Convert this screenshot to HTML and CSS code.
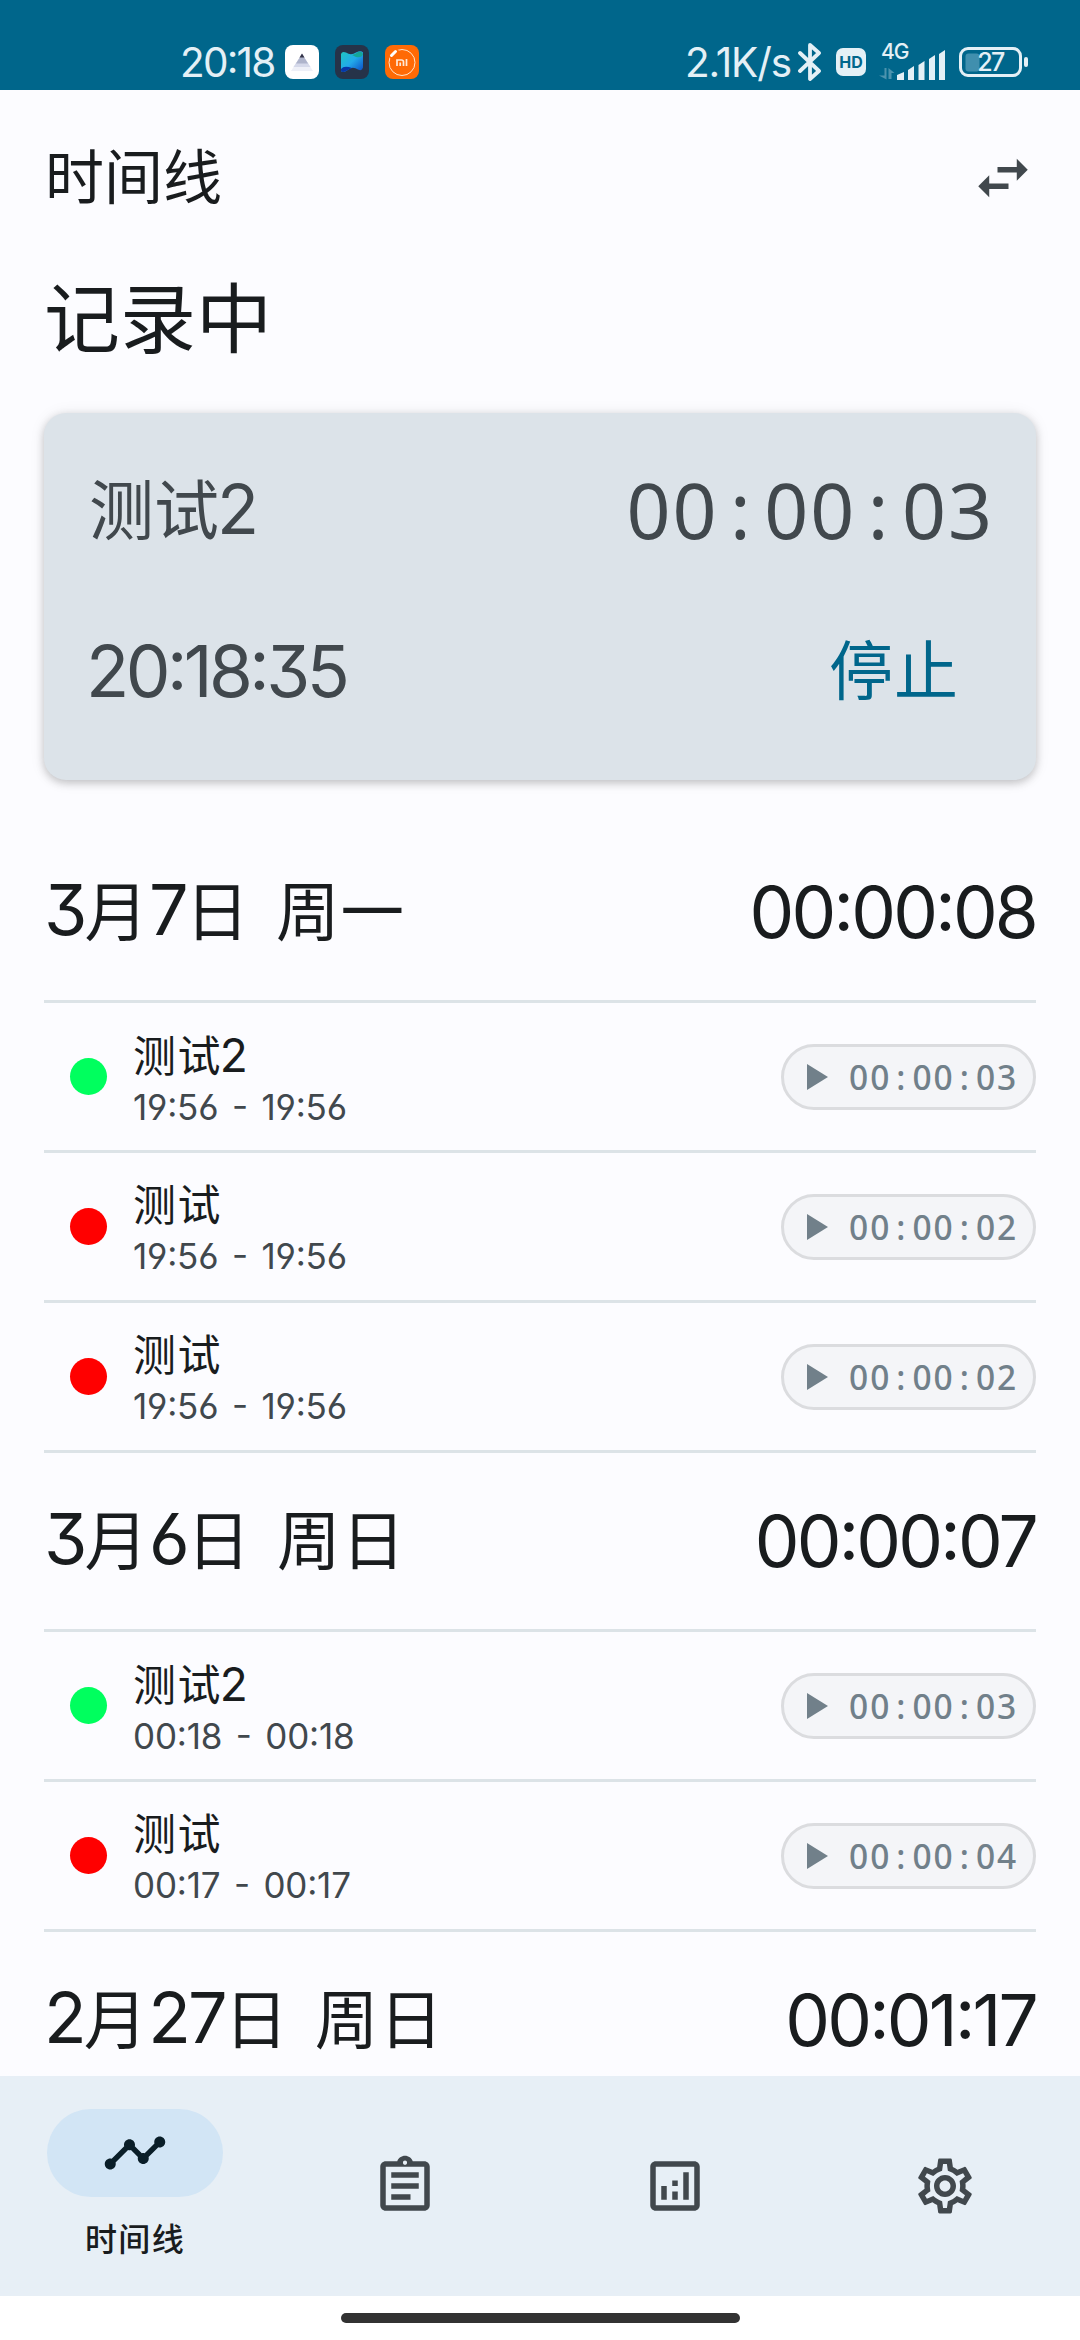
FILE: index.html
```
<!DOCTYPE html>
<html lang="zh-CN">
<head>
<meta charset="utf-8">
<title>时间线</title>
<link rel="stylesheet" href="styles.css">
</head>
<body>
<div class="screen">
  <div class="status">
    <div class="status-left">
      <span class="clock">20:18</span>
      <svg class="app" viewBox="0 0 34 34"><rect width="34" height="34" rx="8" fill="#fff"/><path d="M17 9L6 26h22z" fill="#eef0f8"/><path d="M17 9L8.500 22h17z" fill="#d5d9ea"/><path d="M17 9L11 18.500h12z" fill="#aeb4cb"/><path d="M17 8.500L14.500 12.500h5z" fill="#343448"/></svg>
      <svg class="app" viewBox="0 0 34 34"><defs><linearGradient id="ribbon" x1="0" y1="0" x2="1" y2="1"><stop offset="0" stop-color="#1fc7c0"/><stop offset=".5" stop-color="#22a9ea"/><stop offset="1" stop-color="#0b49c4"/></linearGradient></defs><rect width="34" height="34" rx="8" fill="#263349"/><path d="M6 9q1-3 5-1.500 5 3.500 10 0 5-2.500 7 0v15q-1 4-5 2-6-4-11 1-5 3-6 0z" fill="url(#ribbon)"/><path d="M6 24q3-4 11-1-3 1-5 2.500-5 3-6 0z" fill="#0736a8"/><path d="M17 10q4-1 6-3 4-1 5 2-1 4-7 3z" fill="#15a697"/></svg>
      <svg class="app" viewBox="0 0 34 34"><rect width="34" height="34" rx="8" fill="#ff6a05"/><circle cx="17" cy="17.500" r="13" fill="none" stroke="#ffe3c8" stroke-width="1"/><path d="M4 12l8-8" stroke="#ff6a05" stroke-width="6"/><path d="M6.500 10.500l4-4" stroke="#fff" stroke-width="3" stroke-linecap="round"/><path d="M12 21v-6h4.500q2 0 2 2v4M15.200 17.500V21M21.500 14v7" fill="none" stroke="#ffe9d6" stroke-width="1.700"/></svg>
    </div>
    <div class="status-right">
      <span class="speed">2.1K/s</span>
      <svg class="bt" viewBox="0 0 24 38"><path d="M2 10l19 18-9 8V2l9 8L2 28" fill="none" stroke="#e4f0f6" stroke-width="3.800" stroke-linejoin="round" stroke-linecap="round"/></svg>
      <span class="hd">HD</span>
      <div class="signal">
        <svg viewBox="0 0 66 36"><path d="M18 36v-5l7-3v8zM29 36V26l6-4v14zM39.500 36V21l6-4v19zM50 36V15l6-4v25zM60 36V10l6-4v30z" fill="#e4f0f6"/><path d="M5.500 24v7.500H0l7.500 4V24zM9.500 35V24l6 5h-3v6z" fill="#4c93ae"/></svg>
        <span class="net">4G</span>
      </div>
      <div class="battery">
        <svg viewBox="0 0 70 31"><rect x="1.500" y="1.500" width="60" height="27" rx="7.500" fill="none" stroke="#e4f0f6" stroke-width="3"/><rect x="6.500" y="6.500" width="14" height="18" rx="3" fill="#408fae"/><rect x="65" y="10" width="4" height="10" rx="2" fill="#e4f0f6"/></svg>
        <span class="level">27</span>
      </div>
    </div>
  </div>

  <header class="appbar">
    <h1 class="title">时间线</h1>
    <svg class="icon swap" viewBox="0 0 24 24"><path d="M6.990 11L3 15l3.990 4v-3H14v-2H6.990v-3zM21 9l-3.990-4v3H10v2h7.010v3L21 9z"/></svg>
  </header>

  <main class="content">
    <h2 class="recording">记录中</h2>
    <section class="card">
      <div class="card-row">
        <span class="card-name">测试<span class="num">2</span></span>
        <span class="timer">00<i>:</i>00<i>:</i>03</span>
      </div>
      <div class="card-row second">
        <span class="start">20:18:35</span>
        <span class="stop">停止</span>
      </div>
    </section>

    <div class="day"><span class="date"><b>3</b>月<b>7</b>日 周一</span><span class="total">00:00:08</span></div>
    <div class="entry"><span class="dot green"></span><div class="info"><div class="name">测试<b>2</b></div><div class="range">19:56 - 19:56</div></div><div class="pill"><svg viewBox="0 0 21 26"><path d="M0 0l21 13L0 26z"/></svg><span class="mono">00<i>:</i>00<i>:</i>03</span></div></div>
    <div class="entry"><span class="dot red"></span><div class="info"><div class="name">测试</div><div class="range">19:56 - 19:56</div></div><div class="pill"><svg viewBox="0 0 21 26"><path d="M0 0l21 13L0 26z"/></svg><span class="mono">00<i>:</i>00<i>:</i>02</span></div></div>
    <div class="entry last"><span class="dot red"></span><div class="info"><div class="name">测试</div><div class="range">19:56 - 19:56</div></div><div class="pill"><svg viewBox="0 0 21 26"><path d="M0 0l21 13L0 26z"/></svg><span class="mono">00<i>:</i>00<i>:</i>02</span></div></div>

    <div class="day"><span class="date"><b>3</b>月<b>6</b>日 周日</span><span class="total">00:00:07</span></div>
    <div class="entry"><span class="dot green"></span><div class="info"><div class="name">测试<b>2</b></div><div class="range">00:18 - 00:18</div></div><div class="pill"><svg viewBox="0 0 21 26"><path d="M0 0l21 13L0 26z"/></svg><span class="mono">00<i>:</i>00<i>:</i>03</span></div></div>
    <div class="entry last"><span class="dot red"></span><div class="info"><div class="name">测试</div><div class="range">00:17 - 00:17</div></div><div class="pill"><svg viewBox="0 0 21 26"><path d="M0 0l21 13L0 26z"/></svg><span class="mono">00<i>:</i>00<i>:</i>04</span></div></div>

    <div class="day"><span class="date"><b>2</b>月<b>27</b>日 周日</span><span class="total">00:01:17</span></div>
  </main>

  <nav class="nav">
    <div class="tab active">
      <div class="indicator"><svg class="icon" viewBox="0 0 24 24"><path d="M23 8c0 1.100-.9 2-2 2-.18 0-.35-.02-.51-.07l-3.560 3.550c.05.16.07.34.07.52 0 1.100-.9 2-2 2s-2-.9-2-2c0-.18.02-.36.07-.52l-2.550-2.550c-.16.05-.34.07-.52.07s-.36-.02-.52-.07l-4.550 4.560c.05.16.07.33.07.51 0 1.100-.9 2-2 2s-2-.9-2-2 .9-2 2-2c.18 0 .35.02.51.07l4.560-4.550C8.020 9.360 8 9.180 8 9c0-1.100.9-2 2-2s2 .9 2 2c0 .18-.02.36-.07.52l2.550 2.550c.16-.05.34-.07.52-.07s.36.02.52.07l3.550-3.560C19.020 8.350 19 8.180 19 8c0-1.100.9-2 2-2s2 .9 2 2z"/></svg></div>
      <span class="label">时间线</span>
    </div>
    <div class="tab"><svg class="icon" viewBox="0 0 24 24"><path d="M7 15h7v2H7zm0-4h10v2H7zm0-4h10v2H7zm12-4h-4.180C14.400 1.840 13.300 1 12 1c-1.300 0-2.400.84-2.820 2H5c-1.100 0-2 .9-2 2v14c0 1.100.9 2 2 2h14c1.100 0 2-.9 2-2V5c0-1.100-.9-2-2-2zm-7-.25c.41 0 .75.34.75.75s-.34.75-.75.75-.75-.34-.75-.75.34-.75.75-.75zM19 19H5V5h14v14z"/></svg></div>
    <div class="tab"><svg class="icon" viewBox="0 0 24 24"><path d="M19 3H5c-1.100 0-2 .9-2 2v14c0 1.100.9 2 2 2h14c1.100 0 2-.9 2-2V5c0-1.100-.9-2-2-2zm0 16H5V5h14v14zM7 12h2v5H7zm8-5h2v10h-2zm-4 7h2v3h-2zm0-4h2v2h-2z"/></svg></div>
    <div class="tab"><svg class="icon" viewBox="0 0 24 24"><path d="M19.430 12.980c.04-.32.07-.64.07-.98 0-.34-.03-.66-.07-.98l2.110-1.650c.19-.15.24-.42.12-.64l-2-3.460c-.09-.16-.26-.25-.44-.25-.06 0-.12.01-.17.03l-2.490 1c-.52-.4-1.080-.73-1.690-.98l-.38-2.650C14.460 2.180 14.250 2 14 2h-4c-.25 0-.46.18-.49.42l-.38 2.650c-.61.25-1.170.59-1.690.98l-2.490-1c-.06-.02-.12-.03-.18-.03-.17 0-.34.09-.43.25l-2 3.460c-.13.22-.07.49.12.64l2.110 1.650c-.04.32-.07.65-.07.98 0 .33.03.66.07.98l-2.110 1.650c-.19.15-.24.42-.12.64l2 3.460c.09.16.26.25.44.25.06 0 .12-.01.17-.03l2.490-1c.52.4 1.080.73 1.690.98l.38 2.650c.03.24.24.42.49.42h4c.25 0 .46-.18.49-.42l.38-2.650c.61-.25 1.170-.59 1.690-.98l2.490 1c.06.02.12.03.18.03.17 0 .34-.09.43-.25l2-3.460c.12-.22.07-.49-.12-.64l-2.110-1.650zm-1.980-1.710c.04.31.05.52.05.73 0 .21-.02.43-.05.73l-.14 1.130.89.7 1.080.84-.7 1.210-1.270-.51-1.040-.42-.9.68c-.43.32-.84.56-1.250.73l-1.060.43-.16 1.130-.2 1.350h-1.400l-.19-1.350-.16-1.130-1.060-.43c-.43-.18-.83-.41-1.230-.71l-.91-.7-1.060.43-1.270.51-.7-1.210 1.080-.84.89-.7-.14-1.130c-.03-.31-.05-.54-.05-.74s.02-.43.05-.73l.14-1.130-.89-.7-1.080-.84.7-1.210 1.270.51 1.040.42.9-.68c.43-.32.84-.56 1.250-.73l1.060-.43.16-1.130.2-1.350h1.390l.19 1.350.16 1.130 1.060.43c.43.18.83.41 1.230.71l.91.7 1.060-.43 1.270-.51.7 1.210-1.070.85-.89.7.14 1.130zM12 8c-2.210 0-4 1.790-4 4s1.790 4 4 4 4-1.790 4-4-1.790-4-4-4zm0 6c-1.100 0-2-.9-2-2s.9-2 2-2 2 .9 2 2-.9 2-2 2z"/></svg></div>
  </nav>
  <div class="gesture"><span></span></div>
</div>
</body>
</html>
```
FILE: styles.css
```
* { box-sizing: border-box; }
body {
  margin: 0;
  font-family: "Inter", "Noto Sans CJK SC", sans-serif;
  font-feature-settings: "cv03", "cv04", "cv09", "calt";
  color: #191c1e;
}
svg { display: block; flex: none; }
h1, h2 { margin: 0; font-weight: 400; }
b, i { font-weight: inherit; font-style: normal; }
.screen {
  width: 1080px;
  height: 2340px;
  display: flex;
  flex-direction: column;
  overflow: hidden;
  background: #fcfcff;
  white-space: nowrap;
}
.icon { width: 66px; height: 66px; fill: #41484d; }

/* system status bar */
.status {
  flex: none;
  height: 90px;
  padding: 34px 51px 0 180px;
  background: #00668b;
  color: #e4f0f6;
  display: flex;
  justify-content: space-between;
}
.status-left, .status-right { display: flex; align-items: center; height: 56px; }
.clock { width: 105px; font-size: 40.500px; letter-spacing: -1.800px; }
.app { width: 34px; height: 34px; margin-right: 16px; }
.speed { width: 113px; font-size: 40.500px; letter-spacing: -1.100px; }
.bt { width: 24px; height: 38px; margin-right: 14px; }
.hd {
  width: 30px;
  height: 28px;
  margin-right: 13px;
  border-radius: 7px;
  background: #e4f0f6;
  color: #00668b;
  font-size: 16px;
  font-weight: 700;
  line-height: 28px;
  text-align: center;
}
.signal { position: relative; width: 66px; margin-right: 14px; }
.net { position: absolute; left: 2px; top: -4px; font-size: 21px; line-height: 24px; letter-spacing: -1px; font-weight: 500; }
.battery { position: relative; width: 70px; }
.level { position: absolute; left: 0; top: 0; width: 63px; font-size: 25px; line-height: 31px; text-align: center; font-weight: 500; letter-spacing: -1.500px; }

/* app bar */
.appbar {
  flex: none;
  height: 176px;
  padding: 0 44px 0 45px;
  display: flex;
  align-items: center;
  justify-content: space-between;
}
.title { font-size: 59px; line-height: 84px; }

.content { flex: 1; min-height: 0; overflow: hidden; padding: 0 44px; }
.recording { height: 147px; padding-top: 1px; font-size: 76px; line-height: 104px; }

/* running record */
.card {
  height: 367px;
  padding: 44px;
  border-radius: 22px;
  background: #dce3e9;
  color: #41484d;
  box-shadow: 0 3px 8px rgba(0, 0, 0, .2), 0 1px 16px rgba(0, 0, 0, .08);
  margin-bottom: 44px;
}
.card-row { height: 108px; display: flex; align-items: center; justify-content: space-between; }
.second { margin-top: 52px; }
.card-name { margin-top: -2px; padding-left: 1px; font-size: 65px; line-height: 88px; }
.num { font-size: 69px; margin-left: -2px; }
.start { margin-left: -2px; font-size: 71px; letter-spacing: -3.600px; }
.timer, .mono { font-family: "Noto Sans", "Noto Sans CJK SC", sans-serif; }
.timer { margin: -4px -2px 0 0; font-size: 77px; letter-spacing: 2px; }
.timer i { padding: 0 11.500px; }
.stop { padding-right: 33px; font-size: 64px; line-height: 90px; letter-spacing: 1px; color: #00668b; }

/* day heading */
.day { height: 176px; display: flex; align-items: center; justify-content: space-between; }
.date { margin-top: -3px; font-size: 63.500px; line-height: 90px; letter-spacing: 1px; word-spacing: 7px; }
.date b { font-size: 70px; letter-spacing: -3px; }
.total { font-size: 71px; letter-spacing: -2.800px; }

/* record rows */
.entry {
  height: 150px;
  border-top: 3px solid #dce3e7;
  display: flex;
  align-items: center;
}
.entry.last { height: 153px; border-bottom: 3px solid #dce3e7; }
.dot { width: 37px; height: 37px; margin: 0 26px 0 26px; border-radius: 50%; }
.green { background: #00ff5e; }
.red { background: #f00; }
.info { flex: 1; padding-top: 3px; }
.name { font-size: 43px; line-height: 56px; letter-spacing: 1.400px; }
.name b { font-size: 46px; margin-left: -2px; }
.range { font-size: 35px; line-height: 46px; word-spacing: 4px; letter-spacing: -.2px; color: #41484d; }
.pill {
  width: 255px;
  height: 66px;
  padding-left: 23px;
  border: 3px solid #dbdcdf;
  border-radius: 33px;
  background: #f4f5f8;
  color: #71808a;
  display: flex;
  align-items: center;
  gap: 21px;
}
.pill svg { width: 21px; height: 26px; fill: #71808a; }
.mono { font-size: 33.500px; font-weight: 550; letter-spacing: 2px; }
.mono i { padding: 0 5px; }

/* bottom navigation */
.nav { flex: none; height: 220px; background: #e7eff6; display: flex; }
.tab { flex: 1; display: flex; flex-direction: column; align-items: center; justify-content: center; }
.active { justify-content: flex-start; padding-top: 33px; }
.indicator {
  width: 176px;
  height: 88px;
  border-radius: 44px;
  background: #d2e5f5;
  display: flex;
  align-items: center;
  justify-content: center;
}
.indicator .icon { fill: #0a1e28; }
.label { margin-top: 20px; font-size: 32px; font-weight: 500; line-height: 46px; letter-spacing: 1.400px; }
.gesture { flex: none; height: 44px; background: #fff; padding-top: 17px; }
.gesture span { display: block; width: 399px; height: 10px; margin: 0 auto; border-radius: 5px; background: #323232; }
```
